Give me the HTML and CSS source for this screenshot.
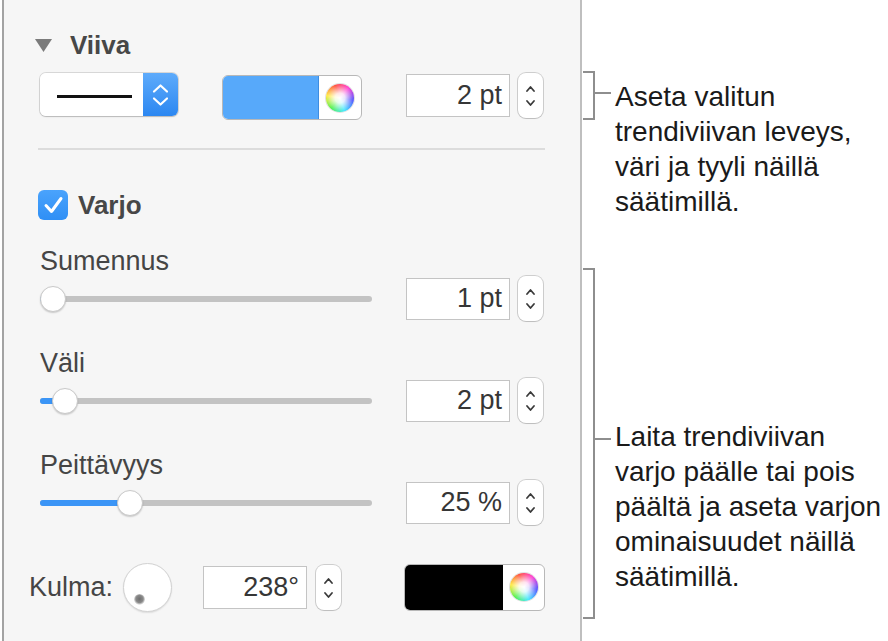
FILE: index.html
```html
<!DOCTYPE html>
<html lang="fi">
<head>
<meta charset="utf-8">
<title>Trendiviiva</title>
<link rel="stylesheet" href="styles.css">
</head>
<body>
<div class="page">
  <section class="panel">
    <div class="sec-head">
      <svg class="disclosure" viewBox="0 0 17 13" width="17" height="13"><path d="M0 0 H17 L8.5 13 Z" fill="#7b7b7b"/></svg>
      <span class="sec-title">Viiva</span>
    </div>

    <div class="ctrl-row">
      <div class="popup">
        <div class="popup-val"><span class="stroke-sample"></span></div>
        <div class="popup-btn">
          <svg viewBox="0 0 35 43" width="35" height="43"><polyline points="11,18.5 17.5,12.5 24,18.5" fill="none" stroke="#fff" stroke-width="2.2" stroke-linecap="round" stroke-linejoin="round"/><polyline points="11,25.5 17.5,31.5 24,25.5" fill="none" stroke="#fff" stroke-width="2.2" stroke-linecap="round" stroke-linejoin="round"/></svg>
        </div>
      </div>
      <div class="well well-blue"><span class="well-color"></span><span class="well-btn"><span class="wheel"></span></span></div>
      <div class="field field-top">2 pt</div>
      <div class="stepper">
        <svg viewBox="0 0 25 45" width="25" height="45"><polyline points="9,18 12.5,14 16,18" fill="none" stroke="#3a3a3a" stroke-width="1.8" stroke-linecap="round" stroke-linejoin="round"/><polyline points="9,28 12.5,32 16,28" fill="none" stroke="#3a3a3a" stroke-width="1.8" stroke-linecap="round" stroke-linejoin="round"/></svg>
      </div>
    </div>

    <div class="divider"></div>

    <div class="check-row">
      <span class="checkbox"><svg viewBox="0 0 30 30" width="30" height="30"><polyline points="8,15.5 13.5,21.5 23,8.5" fill="none" stroke="#fff" stroke-width="3" stroke-linecap="round" stroke-linejoin="round"/></svg></span>
      <span class="sec-title">Varjo</span>
    </div>

    <div class="slider-group">
      <div class="label">Sumennus</div>
      <div class="slider-row">
        <div class="slider" style="--pos: 13px"><span class="track"><span class="fill"></span></span><span class="thumb"></span></div>
        <div class="field">1 pt</div>
        <div class="stepper">
          <svg viewBox="0 0 25 45" width="25" height="45"><polyline points="9,18 12.5,14 16,18" fill="none" stroke="#3a3a3a" stroke-width="1.8" stroke-linecap="round" stroke-linejoin="round"/><polyline points="9,28 12.5,32 16,28" fill="none" stroke="#3a3a3a" stroke-width="1.8" stroke-linecap="round" stroke-linejoin="round"/></svg>
        </div>
      </div>
    </div>

    <div class="slider-group">
      <div class="label">Väli</div>
      <div class="slider-row">
        <div class="slider" style="--pos: 25px"><span class="track"><span class="fill"></span></span><span class="thumb"></span></div>
        <div class="field">2 pt</div>
        <div class="stepper">
          <svg viewBox="0 0 25 45" width="25" height="45"><polyline points="9,18 12.5,14 16,18" fill="none" stroke="#3a3a3a" stroke-width="1.8" stroke-linecap="round" stroke-linejoin="round"/><polyline points="9,28 12.5,32 16,28" fill="none" stroke="#3a3a3a" stroke-width="1.8" stroke-linecap="round" stroke-linejoin="round"/></svg>
        </div>
      </div>
    </div>

    <div class="slider-group">
      <div class="label">Peittävyys</div>
      <div class="slider-row">
        <div class="slider" style="--pos: 90px"><span class="track"><span class="fill"></span></span><span class="thumb"></span></div>
        <div class="field">25 %</div>
        <div class="stepper">
          <svg viewBox="0 0 25 45" width="25" height="45"><polyline points="9,18 12.5,14 16,18" fill="none" stroke="#3a3a3a" stroke-width="1.8" stroke-linecap="round" stroke-linejoin="round"/><polyline points="9,28 12.5,32 16,28" fill="none" stroke="#3a3a3a" stroke-width="1.8" stroke-linecap="round" stroke-linejoin="round"/></svg>
        </div>
      </div>
    </div>

    <div class="angle-row">
      <span class="label angle-label">Kulma:</span>
      <span class="dial"><span class="dial-dot"></span></span>
      <div class="field field-angle">238°</div>
      <div class="stepper stepper-angle">
        <svg viewBox="0 0 25 45" width="25" height="45"><polyline points="9,18 12.5,14 16,18" fill="none" stroke="#3a3a3a" stroke-width="1.8" stroke-linecap="round" stroke-linejoin="round"/><polyline points="9,28 12.5,32 16,28" fill="none" stroke="#3a3a3a" stroke-width="1.8" stroke-linecap="round" stroke-linejoin="round"/></svg>
      </div>
      <div class="well well-black"><span class="well-color"></span><span class="well-btn"><span class="wheel"></span></span></div>
    </div>
  </section>

  <aside class="notes">
    <div class="note note-line">
      <span class="bracket"></span>
      <span class="tick"></span>
      <p>Aseta valitun<br>trendiviivan leveys,<br>väri ja tyyli näillä<br>säätimillä.</p>
    </div>
    <div class="note note-shadow">
      <span class="bracket"></span>
      <span class="tick"></span>
      <p>Laita trendiviivan<br>varjo päälle tai pois<br>päältä ja aseta varjon<br>ominaisuudet näillä<br>säätimillä.</p>
    </div>
  </aside>
</div>
</body>
</html>
```

FILE: styles.css
```css
html, body {
  margin: 0;
  padding: 0;
  background: #ffffff;
}

body {
  font-family: "Liberation Sans", Arial, sans-serif;
  color: #444444;
}

.page {
  display: flex;
  width: 888px;
  height: 641px;
  overflow: hidden;
}

/* ---------- Inspector panel ---------- */
.panel {
  flex: none;
  box-sizing: border-box;
  width: 580px;
  height: 641px;
  margin-left: 2px;
  padding: 30px 35px 0 36px;
  background: #f6f6f6;
  border-left: 2px solid #a3a3a3;
  border-right: 2px solid #bfbfbf;
  display: flex;
  flex-direction: column;
}

.sec-head {
  display: flex;
  align-items: center;
  height: 30px;
}

.disclosure {
  flex: none;
  margin-left: -5px;
  margin-right: 18px;
}

.sec-title {
  font-size: 26px;
  line-height: 30px;
  font-weight: bold;
  color: #474747;
}

.ctrl-row {
  display: flex;
  align-items: flex-start;
  height: 47px;
  margin-top: 13px;
}

/* line style popup */
.popup {
  flex: none;
  display: flex;
  width: 138px;
  height: 43px;
  border-radius: 6px;
  box-shadow: 0 0 0 1px rgba(0, 0, 0, 0.12), 0 1px 1.5px rgba(0, 0, 0, 0.15);
  overflow: hidden;
}

.popup-val {
  flex: none;
  width: 103px;
  background: #ffffff;
  position: relative;
}

.stroke-sample {
  position: absolute;
  left: 17px;
  top: 22px;
  width: 75px;
  height: 3px;
  background: #111111;
}

.popup-btn {
  flex: none;
  width: 35px;
  background: linear-gradient(#5eabfb, #2c87f1);
}

.popup-btn svg {
  display: block;
}

/* colour wells */
.well {
  flex: none;
  display: flex;
  box-sizing: border-box;
  border-radius: 6px;
  border: 1px solid #b8b8b8;
  overflow: hidden;
  background: #ffffff;
}

.well-blue {
  width: 140px;
  height: 45px;
  margin-left: 44px;
  margin-top: 2px;
}

.well-blue .well-color {
  flex: none;
  width: 95px;
  background: #57a9fa;
  border-right: 1px solid #3f8de0;
}

.well-black {
  width: 141px;
  height: 47px;
  margin-left: 63px;
}

.well-black .well-color {
  flex: none;
  width: 97px;
  background: #000000;
  border-right: 1px solid #000000;
}

.well-btn {
  flex: 1;
  display: flex;
  align-items: center;
  justify-content: center;
}

.wheel {
  width: 28px;
  height: 28px;
  border-radius: 50%;
  box-shadow: 0 0 0 1px rgba(0, 0, 0, 0.12);
  background:
    radial-gradient(circle, #ffffff 0%, rgba(255, 255, 255, 0.85) 25%, rgba(255, 255, 255, 0) 70%),
    conic-gradient(from -20deg, #ff4a3a, #ff3bd2, #4a4dff, #3ee6ff, #4cf04a, #ffe93a, #ff4a3a);
}

/* numeric fields and steppers */
.field {
  flex: none;
  box-sizing: border-box;
  width: 104px;
  height: 42px;
  margin-left: 34px;
  padding-right: 7px;
  background: #ffffff;
  border: 1px solid #c4c4c4;
  display: flex;
  align-items: center;
  justify-content: flex-end;
  font-size: 27px;
  color: #363636;
}

.field-top {
  height: 43px;
  margin-left: 44px;
  margin-top: 1px;
}

.stepper {
  flex: none;
  box-sizing: border-box;
  width: 25px;
  height: 45px;
  margin-left: 8px;
  background: #ffffff;
  border-radius: 8px;
  box-shadow: 0 0 0 1px rgba(0, 0, 0, 0.16), 0 1px 1px rgba(0, 0, 0, 0.08);
}

.stepper svg {
  display: block;
}

/* divider */
.divider {
  height: 2px;
  margin: 28px 0 0 -2px;
  background: #dcdcdc;
}

/* checkbox row */
.check-row {
  display: flex;
  align-items: center;
  height: 30px;
  margin-top: 40px;
}

.checkbox {
  flex: none;
  width: 30px;
  height: 30px;
  margin-left: -2px;
  margin-right: 10px;
  border-radius: 6px;
  background: linear-gradient(#4aa3fc, #2f8ff5);
}

.checkbox svg {
  display: block;
}

/* labels */
.label {
  font-size: 27px;
  line-height: 30px;
  color: #454545;
}

/* slider groups */
.slider-group {
  margin-top: 27px;
}

.check-row + .slider-group {
  margin-top: 26px;
}

.slider-row {
  display: flex;
  align-items: center;
  height: 45px;
}

.slider {
  flex: none;
  position: relative;
  width: 332px;
  height: 45px;
}

.track {
  position: absolute;
  left: 0;
  right: 0;
  top: 19.5px;
  height: 6px;
  border-radius: 3px;
  background: #c3c3c3;
  overflow: hidden;
}

.fill {
  display: block;
  width: var(--pos);
  height: 100%;
  background: #3b95f6;
}

.thumb {
  position: absolute;
  top: 9.5px;
  left: calc(var(--pos) - 13px);
  box-sizing: border-box;
  width: 26px;
  height: 26px;
  border-radius: 50%;
  background: #ffffff;
  border: 1px solid #c9c9c9;
  box-shadow: 0 1px 1.5px rgba(0, 0, 0, 0.18);
}

/* angle row */
.angle-row {
  display: flex;
  align-items: center;
  height: 50px;
  margin-top: 37px;
}

.angle-label {
  flex: none;
  margin-left: -11px;
}

.dial {
  flex: none;
  position: relative;
  box-sizing: border-box;
  width: 49px;
  height: 49px;
  margin-left: 10px;
  border-radius: 50%;
  background: #ffffff;
  border: 1px solid #d2d2d2;
  box-shadow: 0 1px 1.5px rgba(0, 0, 0, 0.1);
}

.dial-dot {
  position: absolute;
  left: 10px;
  top: 30px;
  width: 11px;
  height: 11px;
  border-radius: 50%;
  background: radial-gradient(circle at 50% 45%, #6e6e6e 0%, #8a8a8a 45%, rgba(160, 160, 160, 0) 75%);
}

.field-angle {
  height: 43px;
  margin-left: 31px;
}

.stepper-angle {
  margin-left: 9px;
}

/* ---------- Annotations ---------- */
.notes {
  flex: 1;
  display: flex;
  flex-direction: column;
  padding-top: 71px;
}

.note {
  display: flex;
  align-items: flex-start;
}

.bracket {
  flex: none;
  box-sizing: border-box;
  width: 12px;
  margin-left: 1px;
  border: 2px solid #8e8e8e;
  border-left: 0;
}

.tick {
  flex: none;
  width: 16px;
  height: 2px;
  background: #8e8e8e;
}

.note p {
  margin: 8px 0 0 4px;
  font-size: 28px;
  line-height: 35px;
  color: #1a1a1a;
  white-space: nowrap;
}

.note-line .bracket {
  height: 49px;
}

.note-line .tick {
  margin-top: 21px;
}

.note-shadow {
  margin-top: 49px;
}

.note-shadow .bracket {
  height: 351px;
}

.note-shadow .tick {
  margin-top: 170px;
}

.note-shadow p {
  margin-top: 151px;
}
```
